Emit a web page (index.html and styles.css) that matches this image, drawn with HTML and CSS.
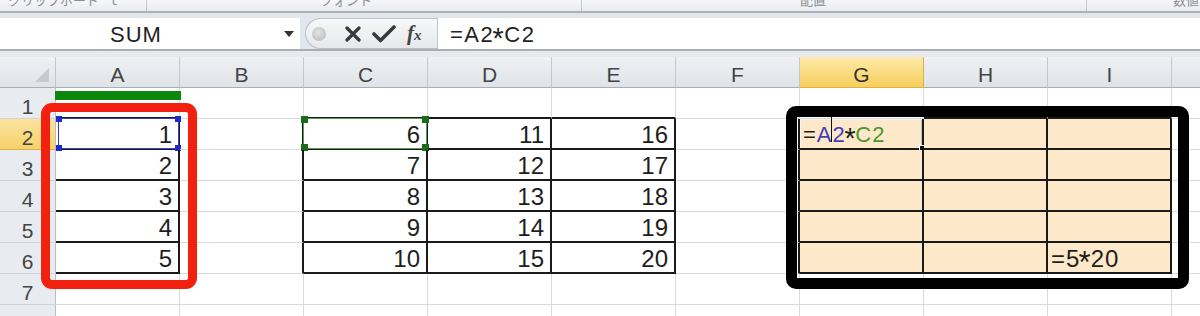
FILE: index.html
```html
<!DOCTYPE html>
<html lang="ja">
<head>
    <meta charset="UTF-8">
    <title>数式の入力 - Excel</title>
    <link rel="stylesheet" href="styles.css">
</head>
<body>
    <div class="ribbon">
        <div class="rgroup g1"><span>クリップボード</span><span class="launch">ｌ</span></div>
        <div class="rgroup g2"><span>フォント</span></div>
        <div class="rgroup g3"><span>配置</span></div>
        <div class="rgroup g4"><span>数値</span></div>
    </div>

    <div class="fbar-wrap">
        <div class="fbar">
            <div class="namebox">
                <span class="name">SUM</span>
                <svg class="drop" width="10" height="6" viewBox="0 0 10 6"><polygon points="0,0 10,0 5,6" fill="#333"/></svg>
            </div>
            <div class="fbtns">
                <span class="dot"></span>
                <svg class="icon-x" width="16" height="16" viewBox="0 0 16 16">
                    <path d="M2 2 L14 14 M14 2 L2 14" stroke="#3a3a3a" stroke-width="3.2" stroke-linecap="round"/>
                </svg>
                <svg class="icon-ok" width="24" height="18" viewBox="0 0 24 18">
                    <path d="M2 9 L8.5 15.5 L22 2" fill="none" stroke="#3a3a3a" stroke-width="3.6" stroke-linecap="round" stroke-linejoin="round"/>
                </svg>
                <span class="fx"><i>f</i><small>x</small></span>
            </div>
            <div class="finput">=A2<span class="ast">*</span>C2</div>
        </div>
    </div>
    <div class="gap"></div>

    <div class="sheet">
        <div class="row hdr">
            <div class="corner"><svg width="56" height="30" viewBox="0 0 56 30"><polygon points="35,25 49,25 49,11" fill="#c6cacf"/></svg></div>
            <div class="ch">A</div><div class="ch">B</div><div class="ch">C</div><div class="ch">D</div><div class="ch">E</div>
            <div class="ch">F</div><div class="ch on">G</div><div class="ch">H</div><div class="ch">I</div><div class="ch">J</div>
        </div>

        <div class="row">
            <div class="rh">1</div>
            <div class="c kb"></div><div class="c"></div><div class="c kb"></div><div class="c kb"></div><div class="c kb"></div>
            <div class="c"></div><div class="c"></div><div class="c kb"></div><div class="c kb"></div><div class="c"></div>
        </div>

        <div class="row">
            <div class="rh on">2</div>
            <div class="c kr kb">1<span class="ref blue"><i class="tl"></i><i class="tr"></i><i class="bl"></i><i class="br"></i></span></div>
            <div class="c kr"></div>
            <div class="c kr kb">6<span class="ref green"><i class="tl"></i><i class="tr"></i><i class="bl"></i><i class="br"></i></span></div>
            <div class="c kr kb">11</div><div class="c kr kb">16</div>
            <div class="c kr"></div>
            <div class="c kr kb pe edit lt">=<span class="r-a">A2</span><span class="ast">*</span><span class="r-c">C2</span><span class="ibeam"></span><span class="handle"></span></div>
            <div class="c kr kb pe"></div><div class="c kr kb pe"></div>
            <div class="c"></div>
        </div>

        <div class="row">
            <div class="rh">3</div>
            <div class="c kr kb">2</div><div class="c kr"></div>
            <div class="c kr kb">7</div><div class="c kr kb">12</div><div class="c kr kb">17</div>
            <div class="c kr"></div>
            <div class="c kr kb pe"></div><div class="c kr kb pe"></div><div class="c kr kb pe"></div>
            <div class="c"></div>
        </div>

        <div class="row">
            <div class="rh">4</div>
            <div class="c kr kb">3</div><div class="c kr"></div>
            <div class="c kr kb">8</div><div class="c kr kb">13</div><div class="c kr kb">18</div>
            <div class="c kr"></div>
            <div class="c kr kb pe"></div><div class="c kr kb pe"></div><div class="c kr kb pe"></div>
            <div class="c"></div>
        </div>

        <div class="row">
            <div class="rh">5</div>
            <div class="c kr kb">4</div><div class="c kr"></div>
            <div class="c kr kb">9</div><div class="c kr kb">14</div><div class="c kr kb">19</div>
            <div class="c kr"></div>
            <div class="c kr kb pe"></div><div class="c kr kb pe"></div><div class="c kr kb pe"></div>
            <div class="c"></div>
        </div>

        <div class="row">
            <div class="rh">6</div>
            <div class="c kr kb">5</div><div class="c kr"></div>
            <div class="c kr kb">10</div><div class="c kr kb">15</div><div class="c kr kb">20</div>
            <div class="c kr"></div>
            <div class="c kr kb pe"></div><div class="c kr kb pe"></div><div class="c kr kb pe lt">=5<span class="ast">*</span>20</div>
            <div class="c"></div>
        </div>

        <div class="row">
            <div class="rh">7</div>
            <div class="c"></div><div class="c"></div><div class="c"></div><div class="c"></div><div class="c"></div>
            <div class="c"></div><div class="c"></div><div class="c"></div><div class="c"></div><div class="c"></div>
        </div>

        <div class="row">
            <div class="rh">8</div>
            <div class="c"></div><div class="c"></div><div class="c"></div><div class="c"></div><div class="c"></div>
            <div class="c"></div><div class="c"></div><div class="c"></div><div class="c"></div><div class="c"></div>
        </div>

        <!-- 注釈 -->
        <div class="mark-bar"></div>
        <div class="mark-red"></div>
        <div class="mark-black"></div>
    </div>
</body>
</html>
```

FILE: styles.css
```css
body { margin: 0; width: 1200px; height: 316px; overflow: hidden; background: #fff; font-family: "Liberation Sans", Arial, sans-serif; color: #222; }

/* リボン（下端だけ見えている） */
.ribbon { display: flex; height: 11px; overflow: hidden; background: linear-gradient(#f5f7f9, #e9ecf0); border-bottom: 2px solid #adb2b8; }
.rgroup { display: flex; box-sizing: border-box; border-right: 1px solid #c3c7cc; font-family: "Noto Sans CJK JP", sans-serif; font-size: 13px; line-height: 14px; color: #8c8f93; }
.rgroup span { margin-top: -7px; }
.rgroup .launch { margin-left: 8px; }
.g1 { width: 147px; padding-left: 8px; }
.g2 { width: 435px; padding-left: 173px; }
.g3 { width: 505px; padding-left: 218px; }
.g4 { flex: 1; padding-left: 86px; border-right: none; }

/* 数式バー */
.fbar-wrap { padding-top: 5px; background: #e3e6ea; }
.fbar { display: flex; height: 31px; border-bottom: 2px solid #a9aeb4; background: #e3e6ea; }
.namebox { display: flex; align-items: center; width: 300px; background: #fff; }
.name { width: 272px; text-align: center; font-size: 22px; letter-spacing: 1px; padding-top: 2px; color: #222; }
.drop { margin-left: 12px; }
.fbtns { display: flex; align-items: center; box-sizing: border-box; width: 132px; margin-left: 5px; border: 1px solid #bcc0c5; border-right: none; border-radius: 16px 0 0 16px; background: linear-gradient(#f7f8f9, #e6e8eb); }
.dot { width: 14px; height: 14px; margin-left: 6px; border-radius: 50%; background: radial-gradient(circle at 45% 40%, #e4e4e4, #c2c2c2 70%, #d6d6d6); }
.icon-x { margin-left: 19px; }
.icon-ok { margin-left: 11px; }
.fx { margin-left: 11px; font-family: "Liberation Serif", serif; font-weight: bold; color: #454545; }
.fx i { font-size: 21px; }
.fx small { font-size: 15px; font-style: italic; }
.finput { flex: 1; display: flex; align-items: center; padding-left: 12px; padding-top: 2px; background: #fff; border-left: 1px solid #c3c7cc; font-size: 22px; letter-spacing: 1.5px; }
.gap { height: 6px; background: #e7e9ec; }

/* 全角っぽい大きめのアスタリスク */
.ast { display: inline-block; transform: translateY(4px) scale(1.3); }

/* シート */
.sheet { position: relative; }
.row { display: flex; height: 31px; }
.row > div { flex: none; box-sizing: border-box; }
.corner, .ch { height: 31px; background: linear-gradient(#eff1f4, #dfe3e7); border-right: 1px solid #c3c8cd; border-bottom: 1px solid #a9afb6; }
.corner { width: 56px; }
.ch { width: 124px; display: flex; align-items: flex-end; justify-content: center; padding-bottom: 2px; font-size: 21px; line-height: 21px; color: #444; }
.ch.on { background: linear-gradient(#fdeaaa, #f8cf5c); border-color: #dfae45; color: #333; }
.rh { width: 56px; display: flex; align-items: flex-end; justify-content: center; padding-bottom: 1px; background: #e8ebef; border-right: 1px solid #b9bec4; border-bottom: 1px solid #d0d4d9; font-size: 21px; line-height: 21px; color: #444; }
.rh.on { background: linear-gradient(#fbe3a0, #f7d16a); border-bottom-color: #dfae45; }

.c { position: relative; width: 124px; display: flex; align-items: flex-end; justify-content: flex-end; padding: 0 6px 1px 0; border-right: 1px solid #dadada; border-bottom: 1px solid #dadada; font-size: 24px; line-height: 24px; color: #1e1e1e; }
.c.lt { justify-content: flex-start; padding-left: 3px; letter-spacing: 1px; }
.kr { border-right: 2px solid #1a1a1a; }
.kb { border-bottom: 2px solid #1a1a1a; }
.pe { background: #fde9c9; }

/* 参照範囲の色枠 */
.ref { position: absolute; left: 2px; top: -1px; right: -1px; bottom: -1px; border: 1px solid; }
.ref i { position: absolute; width: 6px; height: 6px; }
.ref .tl { left: -3px; top: -3px; }
.ref .tr { right: -3px; top: -3px; }
.ref .bl { left: -3px; bottom: -3px; }
.ref .br { right: -3px; bottom: -3px; }
.ref.blue { border-color: #3b3fcf; }
.ref.blue i { background: #1c2bd0; }
.ref.green { left: -1px; border-color: #4e9a4e; }
.ref.green i { background: #1d6a1d; width: 7px; height: 7px; }

/* 編集中のセル */
.edit { font-size: 22px; letter-spacing: 1.5px; box-shadow: inset 1px 1px 0 #f4f4f4, inset -1px 0 0 #bdbdbd; }
.r-a { color: #4040b8; }
.r-c { color: #4b9632; }
.ibeam { position: absolute; left: 31px; top: -2px; width: 1px; height: 25px; background: #111; }
.handle { position: absolute; right: -5px; bottom: -5px; width: 6px; height: 6px; background: #111; border: 1px solid #fff; }

/* 注釈の枠 */
.mark-bar { position: absolute; left: 55px; top: 34px; width: 126px; height: 9px; background: #0d860d; }
.mark-red { position: absolute; left: 41px; top: 46px; width: 156px; height: 186px; box-sizing: border-box; border: 9px solid #f2200f; border-radius: 11px; }
.mark-black { position: absolute; left: 786px; top: 49px; width: 403px; height: 183px; box-sizing: border-box; border: 11px solid #000; border-radius: 10px; }
```
